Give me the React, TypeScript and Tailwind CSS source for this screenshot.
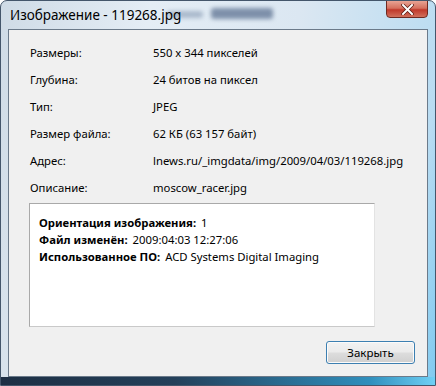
import React from "react";

const rows: [string, string][] = [
  ["Размеры:", "550 x 344 пикселей"],
  ["Глубина:", "24 битов на пиксел"],
  ["Тип:", "JPEG"],
  ["Размер файла:", "62 КБ (63 157 байт)"],
  ["Адрес:", "lnews.ru/_imgdata/img/2009/04/03/119268.jpg"],
  ["Описание:", "moscow_racer.jpg"],
];

export default function App() {
  return (
    <div
      className="relative w-[436px] h-[386px] overflow-hidden rounded-t-[7px] border border-[#44566b] bg-[linear-gradient(100deg,#cfdbe6_0%,#e4edf5_30%,#dbe7f2_60%,#b9dcf2_90%,#7fcaf0_100%)] flex flex-col"
      style={{ fontFamily: '"Noto Sans", "Open Sans", sans-serif' }}
    >
      {/* blurred shapes seen through the glass */}
      <div className="absolute left-[166px] top-[10px] w-[36px] h-[7px] rounded-[3px] bg-[#a9b8cb] blur-[2px]" />
      <div className="absolute left-[210px] top-[7px] w-[62px] h-[11px] rounded-[3px] bg-[#7e90aa] blur-[2px]" />
      <div className="relative h-[28px] shrink-0 flex items-start">
        <div className="pl-[9px] pt-[5px] text-[13.5px] text-black leading-[18px]">Изображение - 119268.jpg</div>
        <div className="absolute right-[7px] top-[-1px] w-[42px] h-[18px] rounded-b-[4px] border border-[#6e2a22] bg-[linear-gradient(180deg,#e8a394_0%,#d5705e_45%,#c0392b_55%,#d1705c_100%)] flex items-center justify-center">
          <svg width="13" height="11" viewBox="0 0 13 11">
            <path d="M2 1 L11 10 M11 1 L2 10" stroke="#5a1a12" strokeWidth="3.4" strokeLinecap="square" />
            <path d="M2 1 L11 10 M11 1 L2 10" stroke="#ffffff" strokeWidth="2" strokeLinecap="square" />
          </svg>
        </div>
      </div>
      <div className="relative mx-[7px] border border-[#6b7a8a] bg-[#f0f0f0] h-[348px] flex flex-col text-[11.3px] text-black leading-[16px]">
        <div className="pt-[15px] pl-[21px] flex flex-col gap-[11px]">
          {rows.map(([k, v]) => (
            <div key={k} className="flex">
              <div className="w-[123px]">{k}</div>
              <div>{v}</div>
            </div>
          ))}
        </div>
        <div className="mt-[7px] ml-[20px] w-[346px] h-[124px] bg-white border border-[#a9a9a9] border-r-[#e3e3e3] border-b-[#c9c9c9] pt-[11px] pl-[9px] flex flex-col gap-[1px] leading-[16px]">
          <div className="flex gap-[5px]">
            <span className="font-bold">Ориентация изображения:</span>
            <span>1</span>
          </div>
          <div className="flex gap-[5px]">
            <span className="font-bold">Файл изменён:</span>
            <span>2009:04:03 12:27:06</span>
          </div>
          <div className="flex gap-[5px]">
            <span className="font-bold">Использованное ПО:</span>
            <span>ACD Systems Digital Imaging</span>
          </div>
        </div>
        <div className="flex justify-end pr-[12px] pt-[14px]">
          <button className="w-[89px] h-[23px] rounded-[3px] border border-[#3c7fb1] bg-[linear-gradient(180deg,#f2f2f2_0%,#ebebeb_48%,#dddddd_52%,#cfcfcf_100%)] shadow-[inset_0_0_0_1px_#fbfbfb] text-[11.5px] text-black flex items-center justify-center">
            Закрыть
          </button>
        </div>
      </div>
      <div className="flex-1 bg-[linear-gradient(90deg,#1d2f44_0%,#24405a_40%,#2f8fbd_85%,#6fd0f5_100%)]" />
    </div>
  );
}
